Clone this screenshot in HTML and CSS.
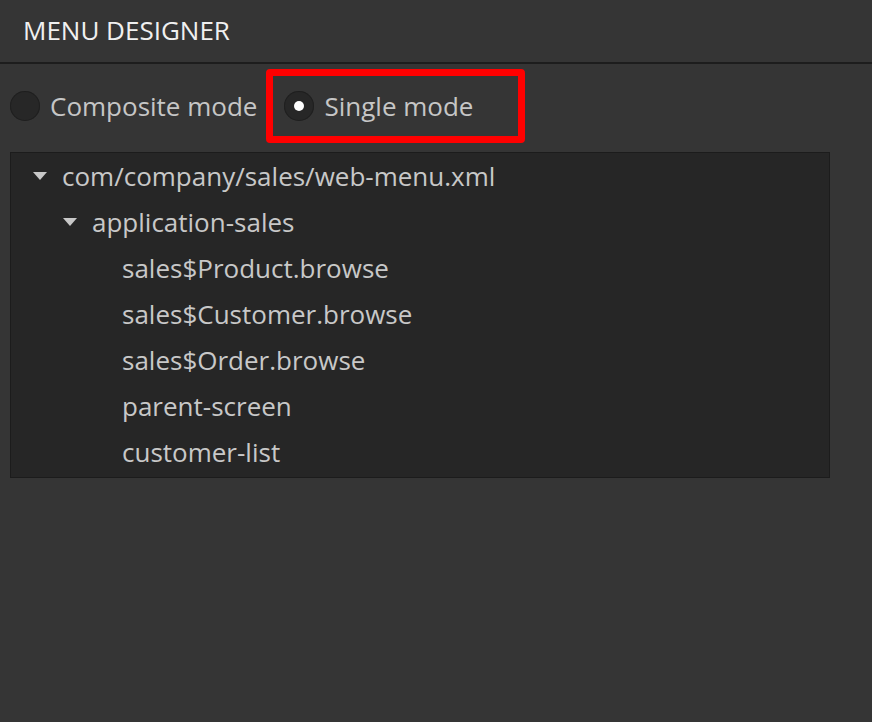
FILE: index.html
```html
<!DOCTYPE html>
<html lang="en">
<head>
    <meta charset="UTF-8">
    <meta name="viewport" content="width=device-width, initial-scale=1.0">
    <title>Menu Designer</title>
    <link rel="stylesheet" href="styles.css">
</head>
<body>
    <div class="header">MENU DESIGNER</div>
    <div class="modes">
        <label class="mode">
            <span class="radio"></span>
            <span>Composite mode</span>
        </label>
        <div class="highlight">
            <label class="mode">
                <span class="radio checked"></span>
                <span>Single mode</span>
            </label>
        </div>
    </div>
    <div class="tree">
        <div class="row lvl0"><span class="toggle open"></span>com/company/sales/web-menu.xml</div>
        <div class="row lvl1"><span class="toggle open"></span>application-sales</div>
        <div class="row lvl2"><span class="toggle"></span>sales$Product.browse</div>
        <div class="row lvl2"><span class="toggle"></span>sales$Customer.browse</div>
        <div class="row lvl2"><span class="toggle"></span>sales$Order.browse</div>
        <div class="row lvl2"><span class="toggle"></span>parent-screen</div>
        <div class="row lvl2"><span class="toggle"></span>customer-list</div>
    </div>
</body>
</html>
```

FILE: styles.css
```css
*{
    margin: 0;
    padding: 0;
    box-sizing: border-box;
}
body{
    background-color: #353535;
    font-family: "Open Sans", sans-serif;
    color: #c6c6c6;
}
.header{
    height: 64px;
    display: flex;
    align-items: center;
    padding-left: 23px;
    padding-bottom: 3px;
    font-size: 26px;
    color: #f0f0f0;
    border-bottom: 2px solid #1d1d1d;
}
.modes{
    display: flex;
    align-items: center;
    gap: 9px;
    margin-top: 5px;
    padding-left: 10px;
}
.mode{
    display: flex;
    align-items: center;
    gap: 10px;
    font-size: 26px;
}
.radio{
    width: 30px;
    height: 30px;
    border-radius: 50%;
    background-color: #272727;
    box-shadow: inset 0 0 0 1px #1f1f1f;
    display: flex;
    align-items: center;
    justify-content: center;
}
.radio.checked::after{
    content: "";
    width: 10px;
    height: 10px;
    border-radius: 50%;
    background-color: #fff;
}
/* red frame round the selected option */
.highlight{
    border: 7px solid #ff0000;
    border-radius: 4px;
    height: 74px;
    width: 259px;
    display: flex;
    align-items: center;
    padding-left: 11px;
}
.tree{
    margin: 9px 0 0 10px;
    width: 820px;
    background-color: #262626;
    border: 1px solid #1c1c1c;
    padding: 1px 0;
}
.row{
    height: 46px;
    display: flex;
    align-items: center;
    padding-bottom: 2px;
    font-size: 26px;
    color: #c8c8c8;
}
.lvl0{ padding-left: 22px; }
.lvl1{ padding-left: 52px; }
.lvl2{ padding-left: 82px; }
.toggle{
    width: 29px;
    height: 8px;
    flex-shrink: 0;
}
.toggle.open::before{
    content: "";
    display: block;
    width: 0;
    height: 0;
    border-left: 7px solid transparent;
    border-right: 7px solid transparent;
    border-top: 8px solid #c8c8c8;
}
```
